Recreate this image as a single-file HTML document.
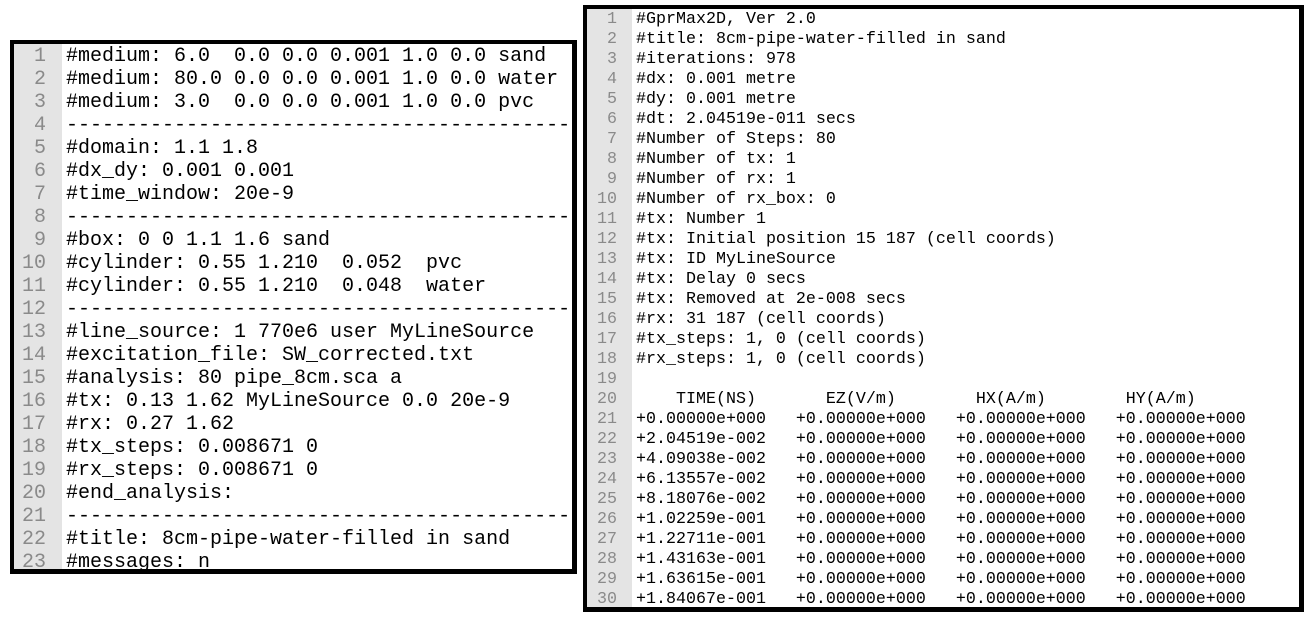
<!DOCTYPE html>
<html><head><meta charset="utf-8"><style>
html,body{margin:0;padding:0;background:#fff;width:1311px;height:620px;overflow:hidden;position:relative}
.box{position:absolute;box-sizing:border-box;border:4px solid #000;background:#fff;overflow:hidden}
.g{position:absolute;left:0;top:0;bottom:0;background:#e4e4e4}
pre{margin:0;position:absolute;font-family:"Liberation Mono",monospace;color:#000}
.n{color:#8a8a8a;text-align:right}
#L{left:10px;top:40px;width:567px;height:534px;border-width:4px 5px 5px 4px}
#L .g{width:48px}
#L pre{font-size:20px;line-height:23px;top:1px}
#L .n{left:0;width:32px}
#L .t{left:52px}
#R{left:583px;top:5px;width:721px;height:607px;border-width:4px 5px 5px 4px}
#R .g{width:45px}
#R pre{font-size:16.67px;line-height:20px;top:1px}
#R .n{left:0;width:30px}
#R .t{left:49px}
</style></head><body>
<div class="box" id="L"><div class="g"></div>
<pre class="n">1
2
3
4
5
6
7
8
9
10
11
12
13
14
15
16
17
18
19
20
21
22
23</pre>
<pre class="t">#medium: 6.0  0.0 0.0 0.001 1.0 0.0 sand
#medium: 80.0 0.0 0.0 0.001 1.0 0.0 water
#medium: 3.0  0.0 0.0 0.001 1.0 0.0 pvc
------------------------------------------
#domain: 1.1 1.8
#dx_dy: 0.001 0.001
#time_window: 20e-9
------------------------------------------
#box: 0 0 1.1 1.6 sand
#cylinder: 0.55 1.210  0.052  pvc
#cylinder: 0.55 1.210  0.048  water
------------------------------------------
#line_source: 1 770e6 user MyLineSource
#excitation_file: SW_corrected.txt
#analysis: 80 pipe_8cm.sca a
#tx: 0.13 1.62 MyLineSource 0.0 20e-9
#rx: 0.27 1.62
#tx_steps: 0.008671 0
#rx_steps: 0.008671 0
#end_analysis:
------------------------------------------
#title: 8cm-pipe-water-filled in sand
#messages: n</pre>
</div>
<div class="box" id="R"><div class="g"></div>
<pre class="n">1
2
3
4
5
6
7
8
9
10
11
12
13
14
15
16
17
18
19
20
21
22
23
24
25
26
27
28
29
30</pre>
<pre class="t">#GprMax2D, Ver 2.0
#title: 8cm-pipe-water-filled in sand
#iterations: 978
#dx: 0.001 metre
#dy: 0.001 metre
#dt: 2.04519e-011 secs
#Number of Steps: 80
#Number of tx: 1
#Number of rx: 1
#Number of rx_box: 0
#tx: Number 1
#tx: Initial position 15 187 (cell coords)
#tx: ID MyLineSource
#tx: Delay 0 secs
#tx: Removed at 2e-008 secs
#rx: 31 187 (cell coords)
#tx_steps: 1, 0 (cell coords)
#rx_steps: 1, 0 (cell coords)

    TIME(NS)       EZ(V/m)        HX(A/m)        HY(A/m)
+0.00000e+000   +0.00000e+000   +0.00000e+000   +0.00000e+000
+2.04519e-002   +0.00000e+000   +0.00000e+000   +0.00000e+000
+4.09038e-002   +0.00000e+000   +0.00000e+000   +0.00000e+000
+6.13557e-002   +0.00000e+000   +0.00000e+000   +0.00000e+000
+8.18076e-002   +0.00000e+000   +0.00000e+000   +0.00000e+000
+1.02259e-001   +0.00000e+000   +0.00000e+000   +0.00000e+000
+1.22711e-001   +0.00000e+000   +0.00000e+000   +0.00000e+000
+1.43163e-001   +0.00000e+000   +0.00000e+000   +0.00000e+000
+1.63615e-001   +0.00000e+000   +0.00000e+000   +0.00000e+000
+1.84067e-001   +0.00000e+000   +0.00000e+000   +0.00000e+000</pre>
</div>
</body></html>
